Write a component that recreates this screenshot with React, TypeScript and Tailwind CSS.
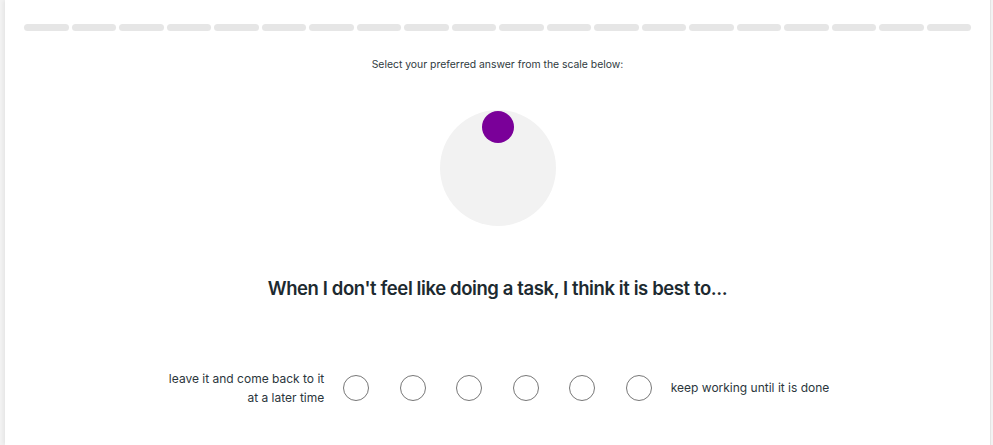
export default function App() {
  const segments = Array.from({ length: 20 });
  const options = [1, 2, 3, 4, 5, 6];

  return (
    <div className="h-[445px] w-full overflow-hidden bg-[#f3f3f3] font-['Inter',sans-serif] text-[#1e2a30]">
      <div className="ml-[5px] mr-[2px] h-full border-r border-[#e4e4e4] bg-white pt-6 shadow-[-2px_0_4px_rgba(0,0,0,0.06)]">
        {/* progress */}
        <div className="mx-[19px] flex gap-[3px]">
          {segments.map((_, i) => (
            <div key={i} className="h-[7px] flex-1 rounded-full bg-[#e6e6e6]" />
          ))}
        </div>

        <p className="mt-[26px] text-center text-[10.4px] text-[#2f3a40]">
          Select your preferred answer from the scale below:
        </p>

        {/* dial */}
        <div className="mt-[37px] flex justify-center">
          <div className="relative h-[116px] w-[116px] rounded-full bg-[#f2f2f2]">
            <div className="absolute left-1/2 top-[1px] h-[32px] w-[32px] -translate-x-1/2 rounded-full bg-[#7a0099]" />
          </div>
        </div>

        <h2 className="mt-[49px] text-center text-[18.5px] font-semibold tracking-[-0.4px] text-[#1d2a30]">
          When I don't feel like doing a task, I think it is best to...
        </h2>

        {/* scale */}
        <div className="mt-[67px] flex items-center justify-center">
          <div className="w-[180px] text-right text-[12px] leading-[19px] text-[#2b363c]">
            leave it and come back to it
            <br />
            at a later time
          </div>
          <div className="ml-[19px] flex gap-[30.5px]">
            {options.map((o) => (
              <button
                key={o}
                className="h-[26px] w-[26px] rounded-full border border-[#777] bg-white"
              />
            ))}
          </div>
          <div className="ml-[19px] w-[180px] text-[12px] text-[#2b363c]">
            keep working until it is done
          </div>
        </div>
      </div>
    </div>
  );
}
